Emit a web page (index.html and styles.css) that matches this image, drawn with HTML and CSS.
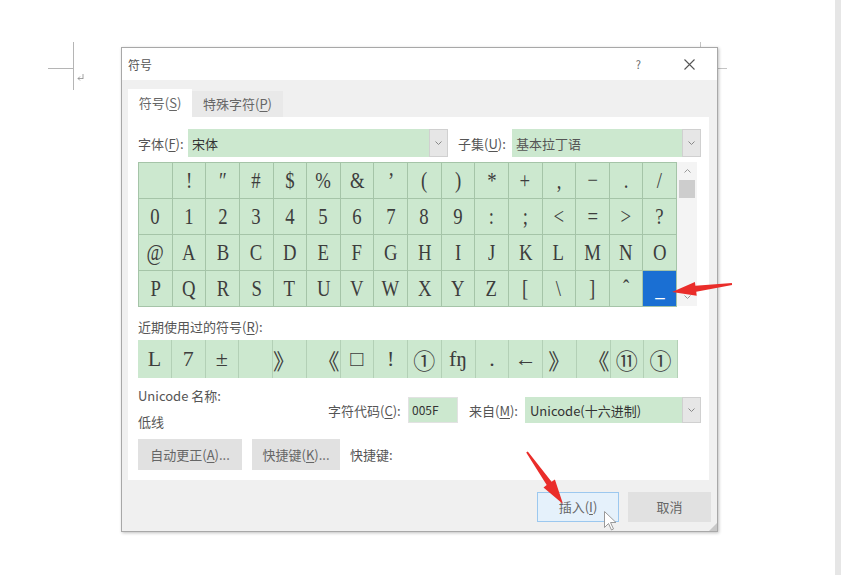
FILE: index.html
```html
<!DOCTYPE html>
<html lang="zh-CN">
<head>
  <meta charset="UTF-8">
  <title>符号</title>
  <link rel="stylesheet" href="styles.css">
</head>
<body>
<div class="page">
  <div class="doc">
    <!-- page corner marks + caret -->
    <svg class="marks" width="841" height="575" viewBox="0 0 841 575">
      <path d="M48 68.5H73.5M73.5 42V90" stroke="#b5b5b5" stroke-width="1" fill="none"/>
      <path d="M78 78.5H83M83 74V79M78 78.5l2-2M78 78.5l2 2" stroke="#8a8a8a" stroke-width="0.8" fill="none"/>
      <path d="M700.5 42V48M718 68.5H727" stroke="#c4c4c4" stroke-width="1" fill="none"/>
    </svg>

    <div class="dialog">
      <div class="titlebar">
        <span class="title">符号</span>
        <span class="help">?</span>
        <svg class="close" width="11" height="11" viewBox="0 0 11 11">
          <path d="M0.5 0.5L10.5 10.5M10.5 0.5L0.5 10.5" stroke="#555" stroke-width="1.1"/>
        </svg>
      </div>

      <div class="body">
        <div class="tabs">
          <div class="tab active">符号(<u>S</u>)</div>
          <div class="tab">特殊字符(<u>P</u>)</div>
        </div>

        <div class="panel">
          <div class="font-row">
            <span class="lbl lbl-font">字体(<u>F</u>):</span>
            <div class="combo combo-font">
              <span>宋体</span>
              <span class="drop"><svg width="7" height="4" viewBox="0 0 7 4"><path d="M0.5 0.5L3.5 3.5L6.5 0.5" stroke="#888" fill="none"/></svg></span>
            </div>
            <span class="lbl lbl-subset">子集(<u>U</u>):</span>
            <div class="combo combo-subset">
              <span class="muted">基本拉丁语</span>
              <span class="drop"><svg width="7" height="4" viewBox="0 0 7 4"><path d="M0.5 0.5L3.5 3.5L6.5 0.5" stroke="#888" fill="none"/></svg></span>
            </div>
          </div>

          <div class="grid-wrap">
            <div class="grid" id="grid"></div>
            <div class="scroll">
              <svg class="arr" width="7" height="4" viewBox="0 0 7 4"><path d="M0.5 3.5L3.5 0.5L6.5 3.5" stroke="#999" fill="none"/></svg>
              <div class="thumb"></div>
              <div class="scroll-fill"></div>
              <svg class="arr" width="7" height="4" viewBox="0 0 7 4"><path d="M0.5 0.5L3.5 3.5L6.5 0.5" stroke="#999" fill="none"/></svg>
            </div>
          </div>

          <div class="recent-label">近期使用过的符号(<u>R</u>):</div>
          <div class="recent" id="recent"></div>

          <div class="info">
            <div class="names">
              <div class="line">Unicode 名称:</div>
              <div class="line">低线</div>
            </div>
            <div class="code-row">
              <span class="lbl lbl-code">字符代码(<u>C</u>):</span>
              <div class="code-input">005F</div>
              <span class="lbl lbl-from">来自(<u>M</u>):</span>
              <div class="combo combo-from">
                <span>Unicode(十六进制)</span>
                <span class="drop"><svg width="7" height="4" viewBox="0 0 7 4"><path d="M0.5 0.5L3.5 3.5L6.5 0.5" stroke="#888" fill="none"/></svg></span>
              </div>
            </div>
          </div>

          <div class="btn-row">
            <div class="btn btn-auto">自动更正(<u>A</u>)...</div>
            <div class="btn btn-key">快捷键(<u>K</u>)...</div>
            <span class="lbl">快捷键:</span>
          </div>
        </div>

        <div class="footer">
          <div class="btn btn-insert">插入(<u>I</u>)</div>
          <div class="btn btn-cancel">取消</div>
        </div>
      </div>
      <svg class="grip" width="8" height="8" viewBox="0 0 8 8"><path d="M8 0V8H0Z" fill="#c8c8c8"/></svg>
    </div>

    <!-- annotation arrows and mouse pointer -->
    <svg class="overlay" width="841" height="575" viewBox="0 0 841 575">
      <polygon fill="#ea2d2a" points="672,292 694.9,281.9 695.4,285.8 731.9,283 732.1,285 696.2,291.8 696.7,295.7"/>
      <polygon fill="#ea2d2a" points="563,504 554.9,479.4 551.6,481.7 527.8,451.4 526.2,452.6 546.7,485.1 543.5,487.4"/>
      <path d="M604.5 511.5V527.5L608.5 523.5L611.5 530L613.5 529L610.5 522.5H616Z" fill="#fff" stroke="#9a9a9a" stroke-width="1"/>
    </svg>
  </div>
  <div class="vbar"></div>
</div>

<script>
  var rows = [
    [' ', '!', '″', '#', '$', '%', '&', '’', '(', ')', '*', '+', ',', '−', '.', '/'],
    ['0', '1', '2', '3', '4', '5', '6', '7', '8', '9', ':', ';', '<', '=', '>', '?'],
    ['@', 'A', 'B', 'C', 'D', 'E', 'F', 'G', 'H', 'I', 'J', 'K', 'L', 'M', 'N', 'O'],
    ['P', 'Q', 'R', 'S', 'T', 'U', 'V', 'W', 'X', 'Y', 'Z', '[', '\\', ']', 'ˆ', '_']
  ];
  var recent = ['L', '7', '±', '', '》', '《', '□', '!', '①', 'fŋ', '.', '←', '》', '《', '⑪', '①'];

  var grid = document.getElementById('grid');
  rows.forEach(function (row, r) {
    row.forEach(function (ch, c) {
      var cell = document.createElement('div');
      cell.className = 'cell';
      if (r === 3 && c === 15) cell.className += ' selected';
      var g = document.createElement('span');
      g.className = 'glyph';
      g.textContent = ch;
      cell.appendChild(g);
      grid.appendChild(cell);
    });
  });

  var rec = document.getElementById('recent');
  recent.forEach(function (ch, i) {
    var cell = document.createElement('div');
    cell.className = 'cell';
    if (ch === '》' && i === 4) cell.className += ' left';
    if (ch === '《') cell.className += ' right';
    var g = document.createElement('span');
    g.className = 'glyph';
    g.textContent = ch;
    cell.appendChild(g);
    rec.appendChild(cell);
  });
</script>
</body>
</html>
```

FILE: styles.css
```css
body {
  margin: 0;
  background: #fff;
  font-family: "Noto Sans CJK SC", "Noto Sans", sans-serif;
  font-size: 13px;
  color: #555;
}
.page {
  display: flex;
  width: 841px;
  height: 575px;
  overflow: hidden;
}
.doc {
  flex: 1;
  position: relative;
}
.vbar {
  width: 6px;
  background: #e6e6e6;
}
.marks, .overlay {
  position: absolute;
  left: 0;
  top: 0;
}
.overlay {
  z-index: 5;
}

/* dialog window */
.dialog {
  position: absolute;
  left: 121px;
  top: 47px;
  width: 597px;
  height: 485px;
  box-sizing: border-box;
  border: 1px solid #a8a8a8;
  box-shadow: 1px 1px 3px rgba(0, 0, 0, 0.25);
  background: #f0f0f0;
  display: flex;
  flex-direction: column;
}
.titlebar {
  height: 32px;
  background: #fff;
  display: flex;
  align-items: center;
  padding-left: 6px;
  color: #555;
  font-size: 12px;
}
.title {
  flex: 1;
}
.help {
  font-size: 11px;
  color: #666;
  margin-right: 43px;
}
.close {
  margin-right: 22px;
}
.body {
  flex: 1;
  padding: 9px 8px 0 6px;
}

.tabs {
  display: flex;
  align-items: flex-end;
  height: 28px;
}
.tab {
  height: 26px;
  line-height: 26px;
  width: 91px;
  text-align: center;
  background: #e9e9e9;
  color: #666;
  box-sizing: border-box;
}
.tab.active {
  height: 28px;
  line-height: 28px;
  width: 64px;
  background: #fff;
}
.tab u, .lbl u, .btn u, .recent-label u {
  text-decoration-thickness: 1px;
  text-underline-offset: 2px;
}

.panel {
  height: 363px;
  background: #fff;
  padding: 12px 0 0 10px;
  box-sizing: border-box;
}

.font-row {
  display: flex;
  align-items: center;
  height: 28px;
}
.lbl {
  color: #555;
  white-space: nowrap;
}
.lbl-font {
  width: 50px;
}
.lbl-subset {
  margin-left: 10px;
  width: 54px;
}
.combo {
  height: 28px;
  background: #cce8cf;
  display: flex;
  align-items: center;
  padding-left: 4px;
  box-sizing: border-box;
  color: #333;
}
.combo > span:first-child {
  flex: 1;
}
.combo .muted {
  color: #555;
}
.combo-font {
  width: 260px;
}
.combo-subset {
  width: 189px;
}
.drop {
  width: 19px;
  height: 100%;
  background: #e6e6e6;
  border: 1px solid #d0d0d0;
  box-sizing: border-box;
  display: flex;
  align-items: center;
  justify-content: center;
}

/* symbol grid */
.grid-wrap {
  display: flex;
  margin-top: 5px;
}
.grid {
  width: 539px;
  display: grid;
  grid-template-columns: repeat(16, 1fr);
  grid-auto-rows: 36px;
  border-top: 1px solid #a5c4a8;
  border-left: 1px solid #a5c4a8;
  box-sizing: border-box;
}
.cell {
  background: #cce8cf;
  border-right: 1px solid #a5c4a8;
  border-bottom: 1px solid #a5c4a8;
  display: flex;
  align-items: center;
  justify-content: center;
  overflow: hidden;
}
.glyph {
  display: inline-block;
  font-family: "Liberation Serif", "DejaVu Serif", "Noto Sans CJK SC", serif;
  font-size: 24px;
  color: #3d3d3d;
  transform: scaleX(0.78);
}
.cell.selected {
  background: #1a6fd3;
}
.cell.selected .glyph {
  color: #fff;
}
.scroll {
  width: 20px;
  height: 144px;
  background: #f4f4f4;
  display: flex;
  flex-direction: column;
  align-items: center;
}
.scroll .arr {
  margin: 7px 0;
}
.thumb {
  width: 16px;
  height: 18px;
  background: #cdcdcd;
}
.scroll-fill {
  flex: 1;
}

/* recently used */
.recent-label {
  margin-top: 11px;
  height: 18px;
  line-height: 18px;
  color: #555;
}
.recent {
  margin-top: 4px;
  width: 540px;
  height: 38px;
  display: grid;
  grid-template-columns: repeat(16, 1fr);
  background: #cce8cf;
}
.recent .cell {
  border-bottom: none;
  border-right: 1px solid #b3d0b6;
}
.recent .cell.left {
  justify-content: flex-start;
}
.recent .cell.right {
  justify-content: flex-end;
}
.recent .glyph {
  transform: none;
  font-size: 22px;
}

/* info rows */
.info {
  display: flex;
  margin-top: 9px;
}
.names {
  width: 180px;
}
.names .line {
  height: 18px;
  line-height: 18px;
  margin-bottom: 8px;
}
.code-row {
  display: flex;
  align-items: center;
  height: 26px;
  margin-top: 10px;
  margin-left: 10px;
}
.lbl-code {
  width: 80px;
}
.code-input {
  width: 50px;
  height: 26px;
  line-height: 24px;
  box-sizing: border-box;
  border: 1px solid #e2e2e2;
  background: #cce8cf;
  padding-left: 3px;
  color: #333;
  font-size: 12px;
}
.lbl-from {
  margin-left: 11px;
  width: 56px;
}
.combo-from {
  width: 176px;
  height: 26px;
  padding-left: 5px;
}

.btn-row {
  display: flex;
  align-items: center;
  gap: 10px;
}
.btn {
  height: 31px;
  line-height: 31px;
  text-align: center;
  background: #e1e1e1;
  color: #666;
  box-sizing: border-box;
}
.btn-auto {
  width: 104px;
}
.btn-key {
  width: 88px;
}

.footer {
  display: flex;
  justify-content: flex-end;
  gap: 9px;
  padding: 12px 0 0;
}
.btn-insert {
  width: 82px;
  height: 30px;
  line-height: 28px;
  background: #e5f1fb;
  border: 1px solid #9cc8ef;
}
.btn-cancel {
  width: 83px;
  height: 30px;
  line-height: 30px;
  margin-right: -2px;
}
.grip {
  position: absolute;
  right: 0;
  bottom: 0;
}
```
